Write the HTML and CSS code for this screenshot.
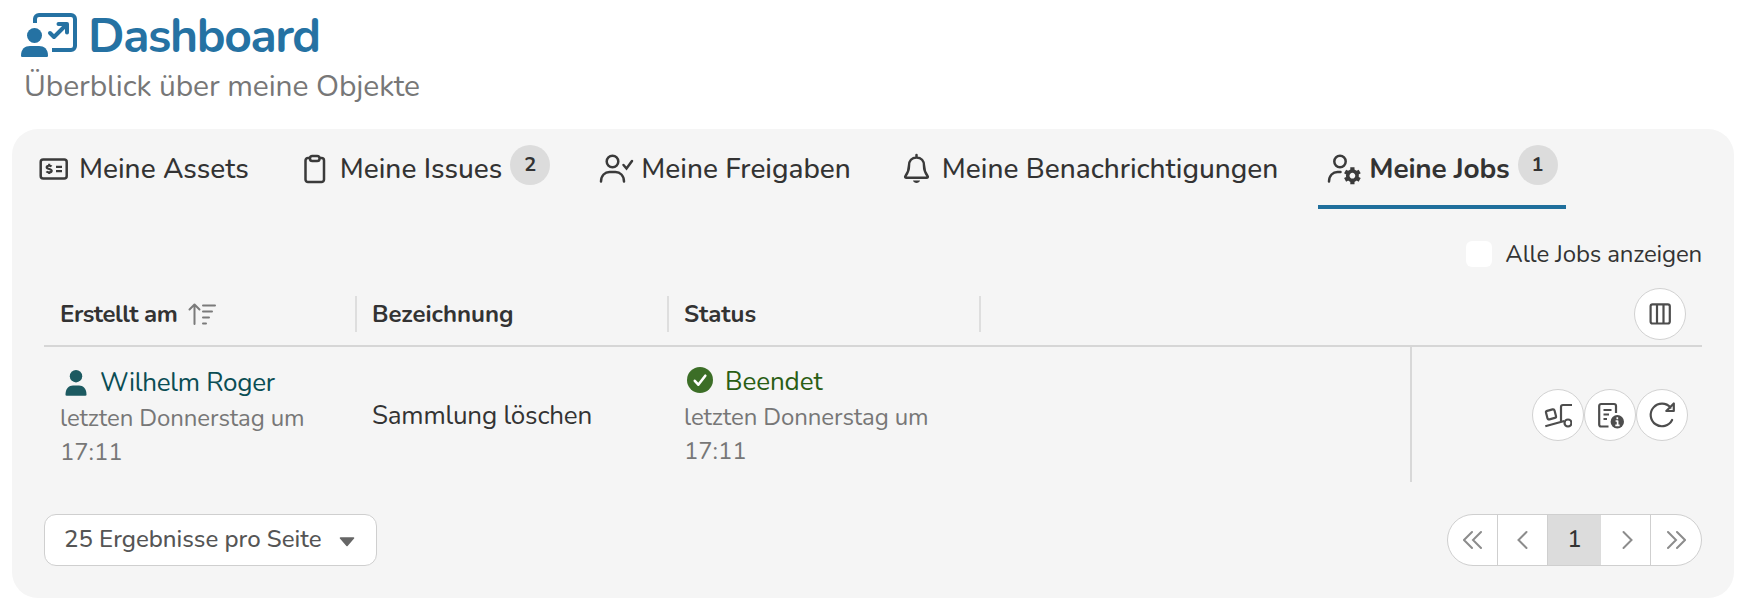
FILE: index.html
```html
<!DOCTYPE html>
<html lang="de">

<head>
    <meta charset="UTF-8">
    <title>Dashboard</title>
    <meta name="viewport" content="width=device-width,initial-scale=1">
    <link rel="stylesheet" href="styles.css">
</head>

<body>
    <header class="page-header">
        <h1 class="title">
            <svg class="title-icon" viewBox="0 0 56 44" width="56" height="44">
                <path d="M14 10V6a4 4 0 0 1 4-4h32a4 4 0 0 1 4 4v27a4 4 0 0 1-4 4H31" fill="none" stroke="currentColor" stroke-width="4"/>
                <path d="M29 20l4 4 12-12M37.500 11H46v8.500" fill="none" stroke="currentColor" stroke-width="4" stroke-linecap="round" stroke-linejoin="round"/>
                <circle cx="13.500" cy="22.500" r="7.500" fill="currentColor"/>
                <path d="M0 42.500C0 36 4 33 9 33h9c5 0 9 3 9 9.500 0 1-.6 1.500-1.500 1.500h-24C.6 44 0 43.500 0 42.500z" fill="currentColor"/>
            </svg>
            <span class="title-text">Dashboard</span>
        </h1>
        <p class="subtitle">Überblick über meine Objekte</p>
    </header>

    <main class="panel">
        <nav class="tabs">
            <a class="tab">
                <svg class="tab-icon" viewBox="0 0 36 36">
                    <rect x="4.700" y="8.500" width="26" height="19" rx="2.500"/>
                    <path class="thin" d="M15.500 15.500c-.8-1-4.800-1.200-4.800.8 0 2.200 5 1.200 5 3.500 0 2-4.200 2-5.200.6M13.200 12.800v1.500M13.200 21.200v1.800M20 15.800h6M20 20.200h6"/>
                </svg>
                <span class="tab-label">Meine Assets</span>
            </a>
            <a class="tab">
                <svg class="tab-icon" viewBox="0 0 36 36">
                    <path d="M13 7h-2a2.500 2.500 0 0 0-2.500 2.500v19A2.500 2.500 0 0 0 11 31h13.500a2.500 2.500 0 0 0 2.500-2.500v-19A2.500 2.500 0 0 0 24.500 7h-2"/>
                    <rect x="13" y="5" width="9.500" height="5" rx="2.300"/>
                </svg>
                <span class="tab-label">Meine Issues</span>
                <span class="badge">2</span>
            </a>
            <a class="tab">
                <svg class="tab-icon" viewBox="0 0 36 36">
                    <circle cx="14.500" cy="10.500" r="5.800"/>
                    <path d="M3 30.500c0-6 4-9.500 8.500-9.500h6c4.500 0 8.500 3.500 8.500 9.500" stroke-linecap="round"/>
                    <path d="M25.500 14l3 3.500 5.500-7.500" stroke-linecap="round"/>
                </svg>
                <span class="tab-label">Meine Freigaben</span>
            </a>
            <a class="tab">
                <svg class="tab-icon" viewBox="0 0 36 36">
                    <path d="M17.500 4v2.500M17.500 6.500c-4.800 0-7.500 3.600-7.500 8 0 5.500-1.300 7.500-3.500 10.500-.7 1-.2 1.800 1 1.800h20c1.200 0 1.700-.8 1-1.800-2.200-3-3.500-5-3.500-10.500 0-4.400-2.700-8-7.500-8z" stroke-linecap="round"/>
                    <path d="M14 29.500h7c-.5 3.200-6.500 3.200-7 0z" class="solid"/>
                </svg>
                <span class="tab-label">Meine Benachrichtigungen</span>
            </a>
            <a class="tab active">
                <svg class="tab-icon" viewBox="0 0 36 36">
                    <circle cx="14" cy="10.500" r="5.700"/>
                    <path d="M3 30.500c0-6 4-9.500 8.500-9.500h3" stroke-linecap="round"/>
                    <g transform="translate(26.400 24.700)">
                        <circle r="4.700" stroke-width="3.600"/>
                        <path d="M0-5.500V-8.500M0 5.500V8.500M4.800-2.800L7.300-4.200M-4.800-2.800L-7.300-4.200M4.800 2.800L7.300 4.200M-4.800 2.800L-7.300 4.200" stroke-width="4.200"/>
                    </g>
                </svg>
                <span class="tab-label">Meine Jobs</span>
                <span class="badge">1</span>
            </a>
        </nav>

        <label class="filter">
            <input class="checkbox" type="checkbox">
            <span class="filter-text">Alle Jobs anzeigen</span>
        </label>

        <div class="table-head">
            <div class="th">
                <span class="th-created">Erstellt am</span>
                <svg class="sort-icon" viewBox="0 0 28 24" width="28" height="24">
                    <path d="M6.500 22V3M1.500 7.500l5-5 5 5M15 3.500h12M15 9.500h9M15 15.500h6M15 21.500h3" fill="none" stroke="#7a7a7a" stroke-width="2" stroke-linecap="round" stroke-linejoin="round"/>
                </svg>
            </div>
            <div class="th">Bezeichnung</div>
            <div class="th">Status</div>
            <button class="round-btn columns-btn">
                <svg viewBox="0 0 28 28" width="28" height="28">
                    <rect x="4.600" y="4.300" width="19.200" height="19.200" rx="2"/>
                    <path d="M11 4.300v19.200M17.500 4.300v19.200"/>
                </svg>
            </button>
        </div>

        <div class="table-row">
            <div class="td">
                <div class="user">
                    <svg class="user-icon" viewBox="0 0 22 26" width="22" height="26">
                        <circle cx="11" cy="6.200" r="6.200" fill="currentColor"/>
                        <path d="M.5 24.500C.5 18.500 4 15.500 8 15.500h6c4 0 7.500 3 7.500 9 0 .8-.4 1.200-1 1.200h-19c-.6 0-1-.4-1-1.200z" fill="currentColor"/>
                    </svg>
                    <span>Wilhelm Roger</span>
                </div>
                <div class="date">letzten Donnerstag um 17:11</div>
            </div>
            <div class="td td-name"><span class="job-name">Sammlung löschen</span></div>
            <div class="td">
                <div class="state">
                    <svg class="state-icon" viewBox="0 0 26 26" width="26" height="26">
                        <circle cx="13" cy="13" r="13" fill="#3c6e27"/>
                        <path d="M7.800 13.800l3.500 3.900 7-9" fill="none" stroke="#fff" stroke-width="2.600" stroke-linecap="round" stroke-linejoin="round"/>
                    </svg>
                    <span>Beendet</span>
                </div>
                <div class="date">letzten Donnerstag um 17:11</div>
            </div>
            <div class="actions">
                <button class="round-btn">
                    <svg viewBox="0 0 28 28" width="28" height="28">
                        <rect x="2.600" y="9" width="8.800" height="8.800" rx="1.600" transform="rotate(-15 7 13.400)"/>
                        <path d="M1.300 25.200L20.300 20M17 20.500V6a2 2 0 0 1 2-2h9"/>
                        <circle cx="24" cy="22" r="3.500"/>
                    </svg>
                </button>
                <button class="round-btn">
                    <svg viewBox="0 0 28 28" width="28" height="28">
                        <path d="M12.500 25.500H5.200a2 2 0 0 1-2-2V5a2 2 0 0 1 2-2H18a2 2 0 0 1 2 2v7M7.500 9h8M7.500 13.500h5.500M7.500 18h3.500"/>
                        <circle class="info-dot" cx="21.300" cy="20.800" r="6.700"/>
                        <path class="info-mark" d="M21.300 16.300v2M19.600 20H21.600v4.300M19.300 24.300h4.300"/>
                    </svg>
                </button>
                <button class="round-btn">
                    <svg viewBox="0 0 28 28" width="28" height="28">
                        <path d="M24.100 19A11.300 11.300 0 1 1 22.600 6.600M25.800 2.500V10H18.300z" stroke-linecap="round"/>
                    </svg>
                </button>
            </div>
        </div>

        <footer class="table-footer">
            <button class="page-size">
                <span class="page-size-text">25 Ergebnisse pro Seite</span>
                <svg class="caret" viewBox="0 0 16 10" width="16" height="10">
                    <path d="M1.500 1h13L8 8.500z" fill="#666" stroke="#666" stroke-width="1.600" stroke-linejoin="round"/>
                </svg>
            </button>
            <div class="pagination">
                <a class="page"><svg viewBox="0 0 20 20" width="20" height="20"><path d="M9 2L1 10l8 8M18 2l-8 8 8 8"/></svg></a>
                <a class="page"><svg viewBox="0 0 20 20" width="20" height="20"><path d="M13.500 2l-8 8 8 8"/></svg></a>
                <a class="page current">1</a>
                <a class="page"><svg viewBox="0 0 20 20" width="20" height="20"><path d="M7.500 2l8 8-8 8"/></svg></a>
                <a class="page"><svg viewBox="0 0 20 20" width="20" height="20"><path d="M2 2l8 8-8 8M11 2l8 8-8 8"/></svg></a>
            </div>
        </footer>
    </main>
</body>

</html>
```
FILE: styles.css
```css
* {
    box-sizing: border-box;
}

body {
    background: #fff;
    font-family: Nunito, Lato, 'Open Sans', sans-serif;
    font-size: 24px;
    line-height: 34px;
    color: #333;
    margin: 0;
}

button {
    font: inherit;
    padding: 0;
    cursor: pointer;
}

.page-header {
    height: 129px;
    padding: 6px 0 0 21px;
}

.title {
    display: flex;
    align-items: center;
    gap: 11px;
    height: 58px;
    margin: 0;
    font-size: 48px;
    line-height: 58px;
    letter-spacing: -1.4px;
    color: #2572a3;
}

.title-text {
    padding-top: 2px;
}

.subtitle {
    margin: 3px 0 0 3px;
    font-size: 30px;
    line-height: 40px;
    letter-spacing: -0.1px;
    color: #777;
}

.panel {
    height: 469px;
    margin: 0 10px 0 12px;
    padding: 8px 32px 0;
    background: #f5f5f5;
    border-radius: 26px;
}

.tabs {
    display: flex;
    gap: 32px;
    height: 72px;
    margin-left: -16px;
}

.tab {
    display: flex;
    padding: 0 8px;
    border-bottom: 4px solid transparent;
    font-size: 28px;
    font-weight: 500;
    line-height: 64px;
    white-space: nowrap;
}

.tab.active {
    border-color: #1f6f9c;
    font-weight: bold;
}

.tab.active .tab-label {
    letter-spacing: -0.2px;
}

.tab-icon {
    width: 36px;
    height: 36px;
    margin: 14px 7px 0 0;
    fill: none;
    stroke: #3a3a3a;
    stroke-width: 2.5;
}

.tab-icon .thin {
    stroke-width: 2.2;
}

.tab-icon .solid {
    fill: #3a3a3a;
    stroke: none;
}

.badge {
    width: 40px;
    height: 40px;
    margin: 8px 0 0 8px;
    border-radius: 50%;
    background: #dcdcdc;
    font-size: 20px;
    font-weight: bold;
    line-height: 39px;
    text-align: center;
}

.filter {
    display: flex;
    justify-content: flex-end;
    align-items: center;
    gap: 13px;
    height: 34px;
    margin-top: 28px;
}

.filter-text {
    letter-spacing: -0.15px;
}

.checkbox {
    appearance: none;
    width: 26px;
    height: 26px;
    margin: 0;
    border-radius: 6px;
    background: #fff;
}

.table-head {
    display: flex;
    align-items: center;
    height: 66px;
    margin-top: 10px;
    padding-top: 2px;
    border-bottom: 2px solid #d6d6d6;
}

.th {
    display: flex;
    align-items: center;
    width: 312px;
    height: 36px;
    padding-left: 15px;
    border-right: 2px solid #dedede;
    font-weight: bold;
}

.th:first-child {
    width: 313px;
    padding-left: 16px;
}

.th-created {
    letter-spacing: -0.45px;
}

.sort-icon {
    margin-left: 11px;
}

.round-btn {
    display: flex;
    align-items: center;
    justify-content: center;
    width: 52px;
    height: 52px;
    border: 1px solid #d2d2d2;
    border-radius: 50%;
    background: #fff;
}

.round-btn svg {
    fill: none;
    stroke: #4d4d4d;
    stroke-width: 2.2;
    stroke-linejoin: round;
}

.round-btn .info-dot {
    fill: #4d4d4d;
    stroke: none;
}

.round-btn .info-mark {
    stroke: #fff;
    stroke-width: 1.7;
}

.columns-btn {
    margin: 0 16px 0 auto;
}

.table-row {
    display: flex;
    height: 135px;
}

.td {
    width: 312px;
    padding: 16px 16px 0;
}

.user,
.state {
    display: flex;
    align-items: center;
    height: 38px;
    font-size: 26px;
}

.user {
    padding-top: 1px;
    letter-spacing: -0.25px;
    color: #0a4d54;
}

.user-icon {
    margin: 0 13px 0 5px;
    color: #1c5a61;
}

.state {
    height: 37px;
    letter-spacing: -0.1px;
    color: #2a5e14;
}

.state-icon {
    margin: -3px 12px 0 3px;
}

.date {
    letter-spacing: -0.1px;
    color: #777;
}

.td-name {
    display: flex;
    align-items: center;
    padding-top: 2px;
    font-size: 26px;
}

.job-name {
    letter-spacing: -0.2px;
}

.actions {
    display: flex;
    align-items: center;
    justify-content: flex-end;
    width: 292px;
    margin-left: auto;
    padding-right: 14px;
    border-left: 2px solid #d8d8d8;
}

.table-footer {
    display: flex;
    justify-content: space-between;
    margin-top: 32px;
}

.page-size {
    display: flex;
    align-items: center;
    justify-content: space-between;
    width: 333px;
    height: 52px;
    padding: 0 21px 2px 19px;
    border: 1px solid #cfcfcf;
    border-radius: 12px;
    background: #fff;
    font-weight: 500;
    color: #555;
}

.caret {
    margin-top: 5px;
}

.pagination {
    display: flex;
    width: 255px;
    height: 52px;
    overflow: hidden;
    border: 1px solid #cfcfcf;
    border-radius: 26px;
    background: #fff;
}

.page {
    display: flex;
    align-items: center;
    justify-content: center;
    width: 50px;
    border-right: 1px solid #cfcfcf;
}

.page:last-child {
    border-right: none;
}

.page.current {
    width: 53px;
    padding-bottom: 2px;
    border: none;
    background: #dcdcdc;
    font-weight: 500;
}

.page svg {
    fill: none;
    stroke: #8c8c8c;
    stroke-width: 2;
    stroke-linecap: round;
}
```
